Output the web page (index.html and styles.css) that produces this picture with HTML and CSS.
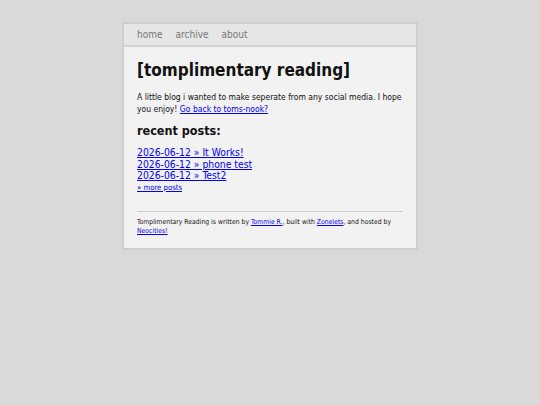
FILE: index.html
```html
<!DOCTYPE html>
<html>
<head>
<meta charset="utf-8">
<title>tomplimentary reading</title>
<link rel="stylesheet" href="styles.css">
</head>
<body>
<div class="page">
  <nav class="nav">
    <a href="#">home</a>
    <a href="#">archive</a>
    <a href="#">about</a>
  </nav>
  <main class="content">
    <h1 class="title">[tomplimentary reading]</h1>
    <p class="intro">A little blog i wanted to make seperate from any social media. I hope you enjoy! <a href="#">Go back to toms-nook?</a></p>
    <h2 class="sub">recent posts:</h2>
    <ul class="posts">
      <li><a href="#">2026-06-12 » It Works!</a></li>
      <li><a href="#">2026-06-12 » phone test</a></li>
      <li><a href="#">2026-06-12 » Test2</a></li>
    </ul>
    <a class="more" href="#">» more posts</a>
    <footer class="foot">Tomplimentary Reading is written by <a href="#">Tommie R.</a>, built with <a href="#">Zonelets</a>, and hosted by <a href="#">Neocities!</a></footer>
  </main>
</div>
</body>
</html>
```
FILE: styles.css
```css
html, body {
  margin: 0;
  padding: 0;
  background: #d9d9d9;
  font-family: "DejaVu Sans Condensed", "DejaVu Sans", sans-serif;
  font-stretch: condensed;
  color: #111;
}
.page {
  width: 292px;
  margin: 22px auto 0;
  background: #f2f2f2;
  border: 2px solid #cfcfcf;
}
.nav {
  display: flex;
  gap: 13px;
  height: 21px;
  align-items: center;
  padding: 0 13px;
  background: #e6e6e6;
  border-bottom: 2px solid #d4d4d4;
}
.nav a {
  color: #777;
  text-decoration: none;
  font-size: 10px;
}
.content {
  padding: 12px 13px 12px;
}
.title {
  font-size: 17px;
  font-weight: bold;
  margin: 0 0 10px;
  line-height: 22px;
}
.intro {
  font-size: 8.5px;
  line-height: 12px;
  margin: 0 0 8px;
}
a { color: #0000ee; }
.sub {
  font-size: 12.5px;
  margin: 0 0 8px;
  line-height: 16px;
}
.posts {
  list-style: none;
  margin: 0;
  padding: 0;
  font-size: 10.3px;
  line-height: 11.5px;
}
.more {
  display: block;
  font-size: 7.7px;
  line-height: 11px;
}
.foot {
  margin-top: 18px;
  border-top: 1px solid #ccc;
  padding-top: 6px;
  font-size: 6.8px;
  line-height: 9px;
}
```
